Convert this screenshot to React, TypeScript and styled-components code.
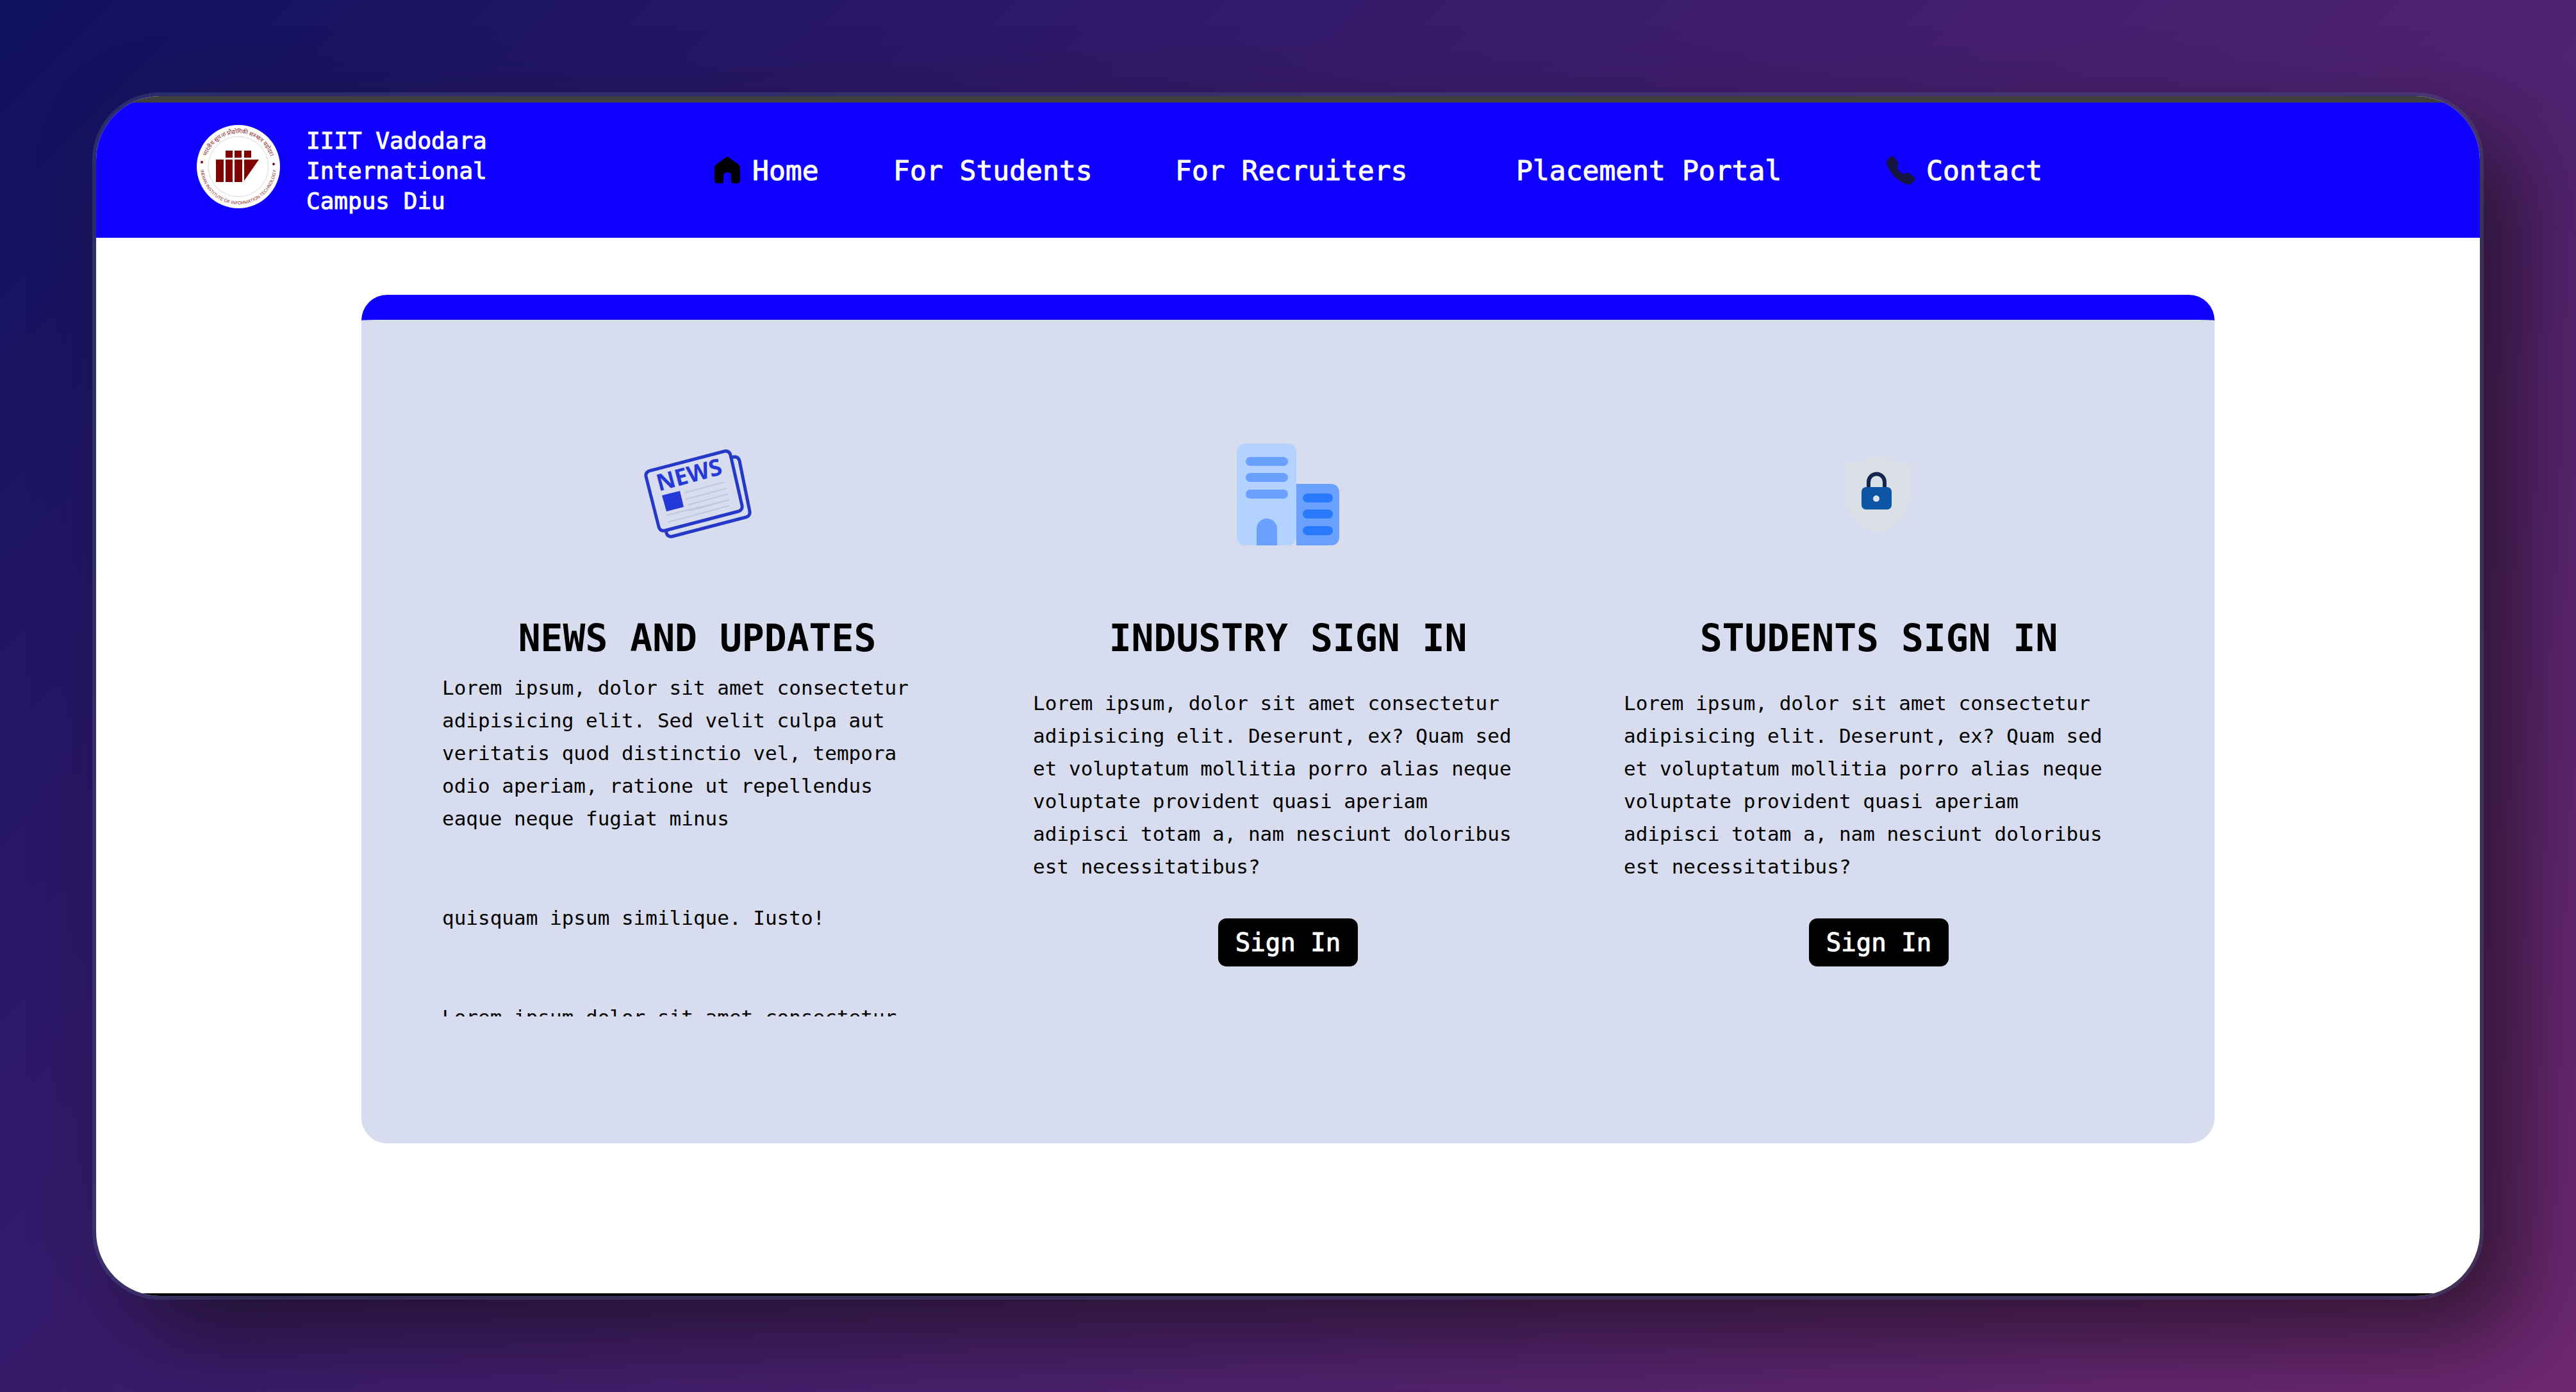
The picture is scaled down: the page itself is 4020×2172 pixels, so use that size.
import React from "react";
import styled, { createGlobalStyle } from "styled-components";
import { BsTelephoneFill } from "react-icons/bs";

const blue = "#0f00ff";
const mono = '"DejaVu Sans Mono", "Liberation Mono", monospace';

const GlobalStyle = createGlobalStyle`
  *, *::before, *::after { box-sizing: border-box; }
  body { margin: 0; font-family: ${mono}; color: #000; }
  h2, p, ul { margin: 0; padding: 0; }
`;

const Backdrop = styled.div`
  display: flex;
  min-height: 100vh;
  padding: 150px;
  background: linear-gradient(135deg, #0f115f 0%, #361b6b 35%, #4f2270 65%, #6e2870 100%);
`;

const Frame = styled.div`
  display: flex;
  flex: 1;
  flex-direction: column;
  min-width: 0;
  overflow: hidden;
  border-radius: 100px;
  background: #fff;
  box-shadow: 0 0 0 6px rgba(74, 84, 132, 0.4), 60px 60px 140px rgba(24, 14, 20, 0.68);
`;

const Edge = styled.div<{ $size: number; $color: string }>`
  flex: none;
  height: ${(p) => p.$size}px;
  background: ${(p) => p.$color};
`;

const Header = styled.header`
  display: grid;
  grid-template-columns: 962fr 2758fr;
  align-items: center;
  height: 211px;
  background: ${blue};
  color: #fff;
  -webkit-text-stroke: 1px currentColor;
`;

const Brand = styled.a`
  display: flex;
  align-items: flex-start;
  gap: 40px;
  padding-left: 156px;
  color: inherit;
  font-size: 36px;
  line-height: 47px;
  text-decoration: none;
`;

const Crest = styled.svg`
  flex: none;
  width: 132px;
  height: 132px;
  -webkit-text-stroke: 0;
`;

const BrandName = styled.span`
  width: 300px;
  padding-top: 2px;
`;

const NavList = styled.ul`
  display: grid;
  grid-template-columns: 282fr 440fr 532fr 578fr 926fr;
  list-style: none;
`;

const NavLink = styled.a<{ $tone?: string }>`
  display: flex;
  align-items: center;
  gap: 18px;
  color: #fff;
  font-size: 43px;
  line-height: 52px;
  text-decoration: none;
  white-space: nowrap;

  svg {
    width: 44px;
    height: 44px;
    color: ${(p) => p.$tone};
  }
`;

const Main = styled.main`
  flex: 1;
  padding: 89px 414px 200px;
`;

const Card = styled.section`
  display: grid;
  grid-template-columns: repeat(3, minmax(0, 1fr));
  gap: 126px;
  padding: 172px 126px 198px;
  border-top: 39px solid ${blue};
  border-radius: 40px;
  background: #d7dcee;
`;

const Column = styled.article`
  display: flex;
  flex-direction: column;
  align-items: center;
`;

const Picture = styled.svg`
  width: 200px;
  height: 200px;
`;

const Title = styled.h2`
  margin-top: 89px;
  font-size: 58px;
  line-height: 72px;
  white-space: nowrap;
`;

const Copy = styled.p`
  width: 100%;
  margin-top: 40px;
  padding-right: 20px;
  font-size: 31px;
  line-height: 51px;
`;

const Ticker = styled.div`
  width: 100%;
  height: 538px;
  margin-top: 16px;
  padding-right: 20px;
  overflow: hidden;
  font-size: 31px;
  line-height: 51px;

  p + p {
    margin-top: 104px;
  }
`;

const SignIn = styled.button`
  margin-top: 55px;
  padding: 0 27px;
  border: 0;
  border-radius: 13px;
  background: #000;
  color: #fff;
  font-family: inherit;
  font-size: 39px;
  line-height: 75px;
  -webkit-text-stroke: 1px currentColor;
`;

const RingText = styled.text<{ $size: number }>`
  fill: #8d2f2f;
  font-family: "Liberation Sans", sans-serif;
  font-size: ${(p) => p.$size}px;
`;

const Masthead = styled.text`
  fill: #2538d8;
  font-family: "Open Sans", "Noto Sans", sans-serif;
  font-size: 36px;
  font-weight: 700;
`;

function CrestLogo() {
  return (
    <Crest viewBox="0 0 132 132" aria-hidden="true">
      <defs>
        <path id="ring-top" d="M14 66a52 52 0 0 1 104 0" />
        <path id="ring-bottom" d="M7 66a59 59 0 0 0 118 0" />
      </defs>
      <circle cx="66" cy="66" r="65" fill="#fff" />
      <circle cx="66" cy="66" r="47" fill="none" stroke="#d9d9d9" strokeWidth="1" />
      <RingText $size={9}>
        <textPath href="#ring-top" startOffset="50%" textAnchor="middle">
          भारतीय सूचना प्रौद्योगिकी संस्थान वडोदरा
        </textPath>
      </RingText>
      <RingText $size={7}>
        <textPath href="#ring-bottom" startOffset="50%" textAnchor="middle">
          INDIAN INSTITUTE OF INFORMATION TECHNOLOGY
        </textPath>
      </RingText>
      <g fill="#800000">
        <circle cx="9" cy="59" r="2" />
        <circle cx="121" cy="62" r="2" />
        <path d="M46 41h11v11H46zM60 41h11v11H60zM75 41h11v11H75z" />
        <path d="M31 55h12v35H31zM46 55h11v35H46zM60 55h12v35H60zM75 55h23L75 88z" />
      </g>
    </Crest>
  );
}

function HomeIcon() {
  return (
    <svg viewBox="0 0 44 44" fill="currentColor" aria-hidden="true">
      <path d="M23 0 41 13q2 2 2 5v19q0 5-5 5h-5q-4 0-4-4V30q0-5-6-5t-6 5v8q0 4-4 4H8q-5 0-5-5V18q0-3 2-5z" />
    </svg>
  );
}

function NewsPicture() {
  return (
    <Picture viewBox="0 0 200 200" role="img" aria-label="Newspaper">
      <g fill="none" stroke="#2538c8" strokeWidth="5" strokeLinejoin="round" strokeLinecap="round">
        <path d="M153 43 157 42q7-1 9 6L182 127q1 7-6 9L61 166q-7 1-9-5L52 158" />
        <path d="m28 63 115-30q7-1 9 6l18 79q1 7-6 9L49 157q-7 1-9-6L20 72q-1-7 8-9z" />
      </g>
      <Masthead transform="rotate(-15 42 94)" x="40" y="95">
        NEWS
      </Masthead>
      <path d="m45 102 28-7 6 25-27 7z" fill="#2538d8" />
      <path
        d="m80 98 63-17M82 108l64-17M85 117l63-17M88 126l62-17M52 133l98-24M54 144l96-26"
        fill="none"
        stroke="#c3c8e0"
        strokeWidth="2"
      />
    </Picture>
  );
}

function BuildingPicture() {
  return (
    <Picture viewBox="0 0 200 200" role="img" aria-label="Office buildings">
      <path d="M113 84h53q14 0 14 14v68q0 14-14 14h-53z" fill="#6aa0ff" />
      <rect x="20" y="21" width="93" height="159" rx="13" fill="#b4d2ff" />
      <path d="M51 180v-26a16 16 0 0 1 32 0v26z" fill="#6aa0ff" />
      <path d="M41 49h52M41 74h52M41 100h52" stroke="#6aa0ff" strokeWidth="14" strokeLinecap="round" />
      <path d="M130 106h33M130 131h33M130 157h33" stroke="#2979ff" strokeWidth="14" strokeLinecap="round" />
    </Picture>
  );
}

function LockPicture() {
  return (
    <Picture viewBox="0 0 200 200" role="img" aria-label="Padlock">
      <path d="M98 40q22 11 50 12v50q-2 42-50 59-48-17-50-59V52q28-1 50-12z" fill="#dae0e6" />
      <path d="M84 91V81a12 12 0 0 1 25 0v10" fill="none" stroke="#14284f" strokeWidth="6" />
      <rect x="73" y="89" width="47" height="35" rx="7" fill="#0d56a6" />
      <circle cx="96" cy="107" r="5" fill="#dce6ef" />
    </Picture>
  );
}

const signInCopy =
  "Lorem ipsum, dolor sit amet consectetur adipisicing elit. Deserunt, ex? Quam sed et voluptatum mollitia porro alias neque voluptate provident quasi aperiam adipisci totam a, nam nesciunt doloribus est necessitatibus?";

const links = [
  { label: "Home", icon: <HomeIcon />, tone: "#000" },
  { label: "For Students" },
  { label: "For Recruiters" },
  { label: "Placement Portal" },
  { label: "Contact", icon: <BsTelephoneFill aria-hidden="true" />, tone: "#14143c" },
];

export default function App() {
  return (
    <>
      <GlobalStyle />
      <Backdrop>
        <Frame>
          <Edge $size={10} $color="#3e3e3e" />
          <Header>
            <Brand href="#home">
              <CrestLogo />
              <BrandName>IIIT Vadodara International Campus Diu</BrandName>
            </Brand>
            <nav aria-label="Main">
              <NavList>
                {links.map((link) => (
                  <li key={link.label}>
                    <NavLink href="#" $tone={link.tone}>
                      {link.icon}
                      {link.label}
                    </NavLink>
                  </li>
                ))}
              </NavList>
            </nav>
          </Header>
          <Main>
            <Card>
              <Column>
                <NewsPicture />
                <Title>NEWS AND UPDATES</Title>
                <Ticker>
                  <p>
                    Lorem ipsum, dolor sit amet consectetur adipisicing elit. Sed velit culpa aut
                    veritatis quod distinctio vel, tempora odio aperiam, ratione ut repellendus
                    eaque neque fugiat minus
                  </p>
                  <p>quisquam ipsum similique. Iusto!</p>
                  <p>Lorem ipsum dolor sit amet consectetur</p>
                </Ticker>
              </Column>
              <Column>
                <BuildingPicture />
                <Title>INDUSTRY SIGN IN</Title>
                <Copy>{signInCopy}</Copy>
                <SignIn type="button">Sign In</SignIn>
              </Column>
              <Column>
                <LockPicture />
                <Title>STUDENTS SIGN IN</Title>
                <Copy>{signInCopy}</Copy>
                <SignIn type="button">Sign In</SignIn>
              </Column>
            </Card>
          </Main>
          <Edge $size={4} $color="#000" />
        </Frame>
      </Backdrop>
    </>
  );
}
